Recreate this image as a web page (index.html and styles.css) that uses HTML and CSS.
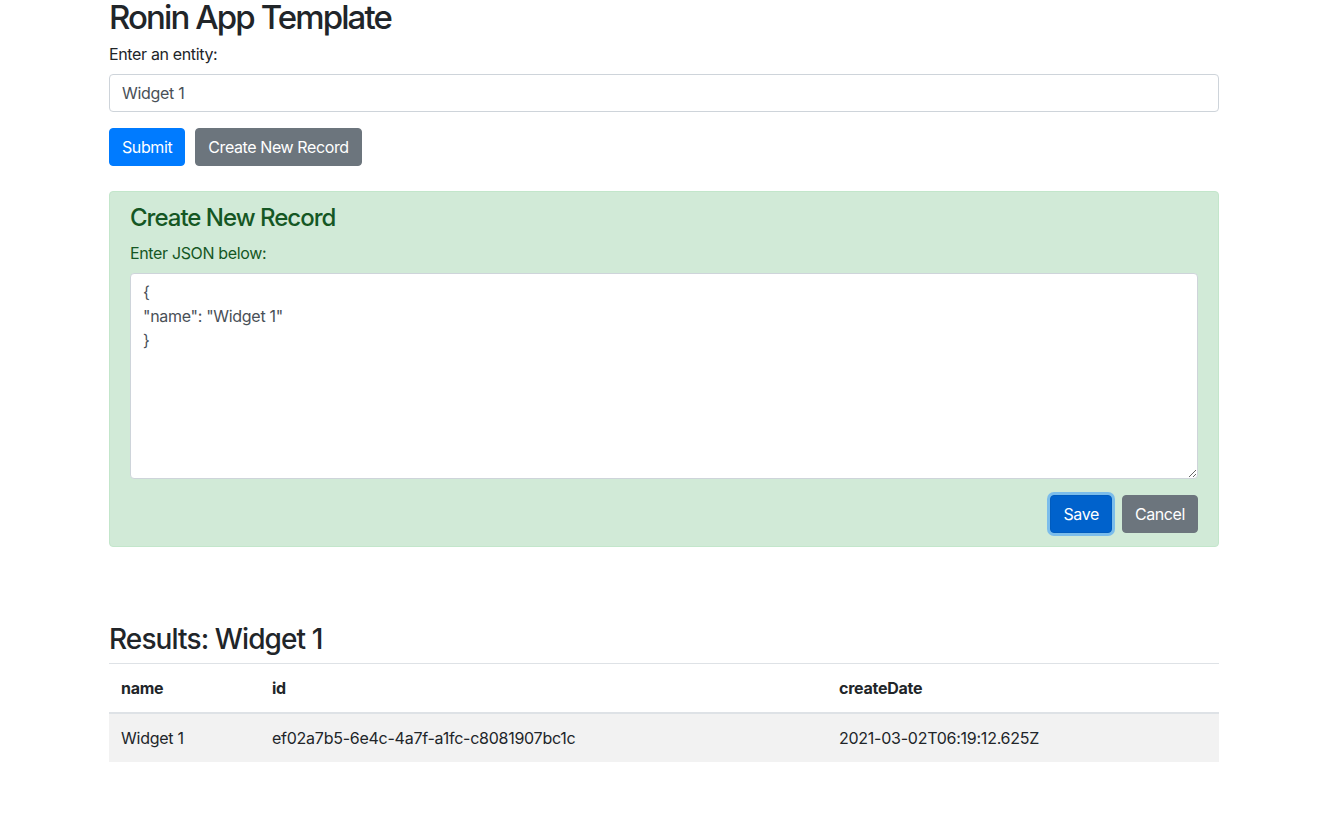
FILE: index.html
```html
<!DOCTYPE html>
<html lang="en">
<head>
<meta charset="utf-8">
<title>Ronin App Template</title>
<link rel="stylesheet" href="styles.css">
</head>
<body>
<div class="container">
  <h2 class="title">Ronin App Template</h2>
  <div class="form-group">
    <label class="label">Enter an entity:</label>
    <input class="form-control" type="text" value="Widget 1">
  </div>
  <div class="actions">
    <button class="btn btn-primary">Submit</button>
    <button class="btn btn-secondary">Create New Record</button>
  </div>
  <div class="alert">
    <h4 class="alert-title">Create New Record</h4>
    <label class="label">Enter JSON below:</label>
    <textarea class="form-control json">{
"name": "Widget 1"
}</textarea>
    <div class="alert-actions">
      <button class="btn btn-save">Save</button>
      <button class="btn btn-secondary">Cancel</button>
    </div>
  </div>
  <h3 class="results-title">Results: Widget 1</h3>
  <table class="table">
    <thead>
      <tr><th class="c-name">name</th><th class="c-id">id</th><th class="c-date">createDate</th></tr>
    </thead>
    <tbody>
      <tr><td>Widget 1</td><td>ef02a7b5-6e4c-4a7f-a1fc-c8081907bc1c</td><td>2021-03-02T06:19:12.625Z</td></tr>
    </tbody>
  </table>
</div>
</body>
</html>
```
FILE: styles.css
```css
* { box-sizing: border-box; }
html, body { margin: 0; padding: 0; background: #fff; }
body {
  font-family: Inter, "Noto Sans", "Liberation Sans", sans-serif;
  font-size: 16px;
  line-height: 1.5;
  color: #212529;
  letter-spacing: -0.35px;
}
.container {
  width: 1140px;
  margin: 0 auto;
  padding: 0 15px;
}
.title {
  font-size: 33px;
  font-weight: 500;
  line-height: 34px;
  letter-spacing: -1.9px;
  margin: 0 0 8px;
}
.label {
  display: block;
  margin-bottom: 8px;
}
.form-group { margin-bottom: 16px; }
.form-control {
  display: block;
  width: 100%;
  height: 38px;
  padding: 6px 12px;
  font-family: inherit;
  font-size: 16px;
  line-height: 1.5;
  letter-spacing: -0.3px;
  color: #495057;
  background: #fff;
  border: 1px solid #ced4da;
  border-radius: 4px;
  margin: 0;
}
.actions {
  display: flex;
  gap: 10px;
  margin-bottom: 25px;
}
.btn {
  display: inline-block;
  font-family: inherit;
  font-size: 16px;
  line-height: 1.5;
  letter-spacing: -0.4px;
  font-weight: 400;
  padding: 6px 12px;
  border: 1px solid transparent;
  border-radius: 4px;
  color: #fff;
  height: 38px;
}
.btn-primary { background: #007bff; border-color: #007bff; }
.btn-secondary { background: #6c757d; border-color: #6c757d; }
.btn-save {
  background: #0062cc;
  border-color: #005cbf;
  box-shadow: 0 0 0 3px rgba(38, 143, 255, 0.5);
}
.alert {
  background: #d1ead7;
  border: 1px solid #c3e6cb;
  border-radius: 4px;
  color: #155724;
  padding: 12px 20px 13px;
  margin-bottom: 16px;
}
.alert-title {
  font-size: 24px;
  font-weight: 500;
  line-height: 1.2;
  letter-spacing: -1px;
  margin: 0 0 8px;
}
.json {
  height: 206px;
  resize: vertical;
}
.alert-actions {
  display: flex;
  justify-content: flex-end;
  gap: 10px;
  margin-top: 16px;
}
.results-title {
  font-size: 28px;
  font-weight: 500;
  line-height: 1.2;
  letter-spacing: -0.9px;
  margin: 76px 0 7px;
}
.table {
  width: 100%;
  border-collapse: collapse;
}
.table th, .table td {
  text-align: left;
  padding: 12px;
  border-top: 1px solid #dee2e6;
  vertical-align: top;
  letter-spacing: -0.25px;
}
.table th {
  font-weight: 700;
  border-bottom: 2px solid #dee2e6;
}
.table tbody tr { background: #f2f2f2; }
.table tbody td { border-top: 0; }
.c-name { width: 151px; }
.c-id { width: 567px; }
```
